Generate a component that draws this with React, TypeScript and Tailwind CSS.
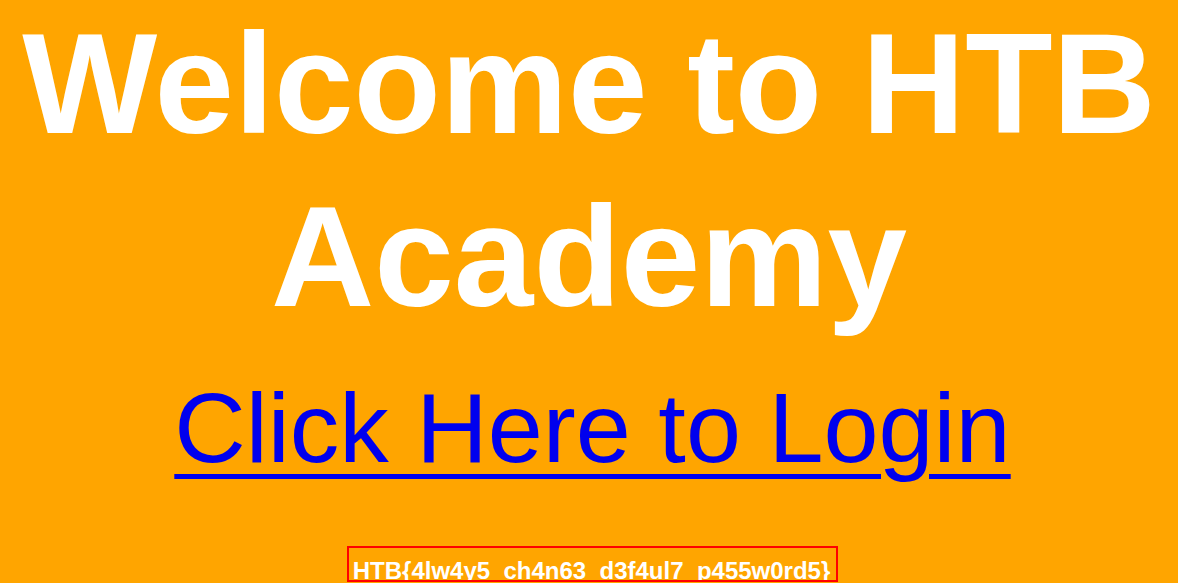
import React from "react";

export default function App() {
  return (
    <div className="h-[583px] overflow-hidden bg-[#FFA500] text-center font-['Liberation_Sans',Arial,sans-serif]">
      <h1 className="-mt-[3px] text-[143px] font-bold leading-[173px] text-white">
        Welcome to HTB Academy
      </h1>
      <div className="mt-[27px] pl-[7px] text-[99px] leading-[115px]">
        <a
          href="#"
          className="text-[#0000EE] underline decoration-5 underline-offset-[12px]"
        >
          Click Here to Login
        </a>
      </div>
      <div className="mt-[61px] pl-[7px]">
        <div className="inline-block h-[36px] overflow-hidden border-2 border-[#FF0000] pl-[4px] pr-[6px] pt-[5px] text-[24px] font-bold leading-normal text-white">
          HTB{"{"}4lw4y5_ch4n63_d3f4ul7_p455w0rd5{"}"}
        </div>
      </div>
    </div>
  );
}
